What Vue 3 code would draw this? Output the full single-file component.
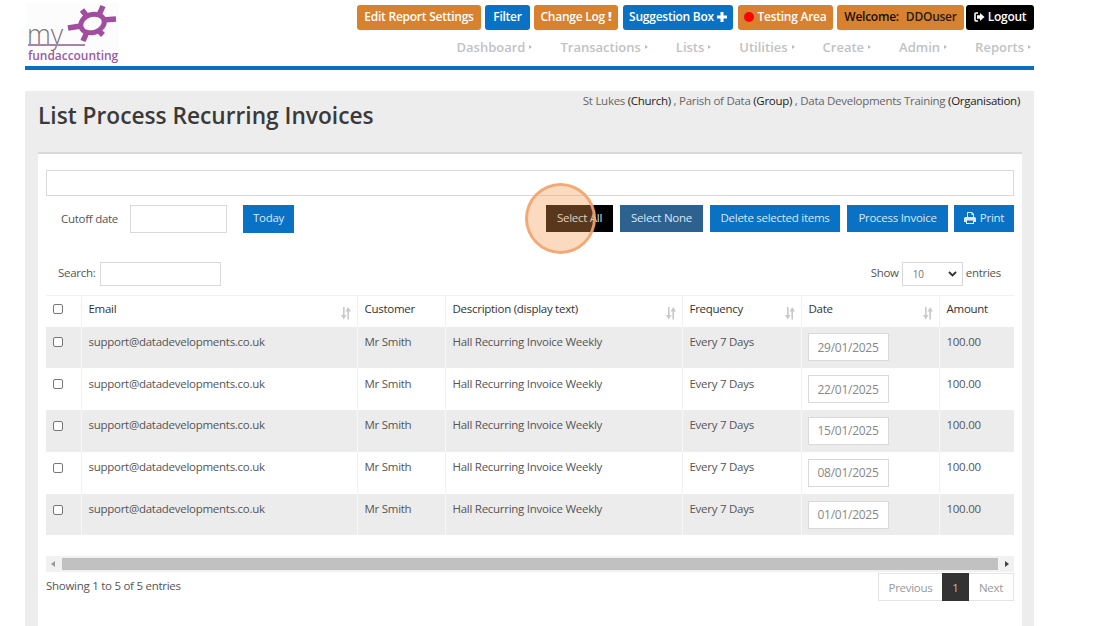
<script setup>
const navItems = ['Dashboard', 'Transactions', 'Lists', 'Utilities', 'Create', 'Admin', 'Reports']
const dates = ['29/01/2025', '22/01/2025', '15/01/2025', '08/01/2025', '01/01/2025']
const sortPath = 'M2 0h1.600v8H5.500L2.800 12.500 0 8h2zM8 12.500H6.400v-8H4.500L7.200 0 10 4.500H8z'
</script>

<template>
  <div class="page">
    <header class="header">
      <div class="logo">
        <svg class="logo-star" viewBox="0 0 60 48" width="60" height="48">
          <g fill="none" stroke="#a04f9f">
            <ellipse cx="34.500" cy="19.500" rx="12" ry="9" stroke-width="5" transform="rotate(-18 34.500 19.500)" />
            <path d="M41 11 45 2M28 11 24 6M45 16 58 15M41 27 45 31M29 28 25 37M23 22 10 24" stroke-width="5.500" />
          </g>
        </svg>
        <span class="logo-my">my</span>
        <span class="logo-rule"></span>
        <span class="logo-name">fundaccounting</span>
      </div>
      <div class="header-right">
        <div class="actions">
          <a class="hbtn orange w-edit">Edit Report Settings</a>
          <a class="hbtn blue w-filter">Filter</a>
          <a class="hbtn orange w-log">Change Log <b class="bang">!</b></a>
          <a class="hbtn blue w-sug">Suggestion Box
            <svg width="10" height="10" viewBox="0 0 10 10"><path d="M5 0v10M0 5h10" stroke="#fff" stroke-width="3" /></svg>
          </a>
          <a class="hbtn orange w-test"><i class="dot"></i>Testing Area</a>
          <a class="hbtn orange dark-text w-wel"><span>Welcome:</span><span class="wel-user">DDOuser</span></a>
          <a class="hbtn black w-out">
            <svg width="11" height="10" viewBox="0 0 11 10"><path d="M4 1H2a1 1 0 0 0-1 1v6a1 1 0 0 0 1 1h2" fill="none" stroke="#fff" stroke-width="1.6" /><path d="M6 1l4.500 4L6 9V6.800H3V3.200h3z" fill="#fff" /></svg>
            Logout
          </a>
        </div>
        <nav class="nav">
          <a v-for="n in navItems" :key="n" class="nav-item">{{ n }}<i class="caret"></i></a>
        </nav>
      </div>
    </header>
    <div class="bluebar"></div>

    <main class="panel">
      <div class="panel-head">
        <h1>List Process Recurring Invoices</h1>
        <p class="org">St Lukes <em>(Church)</em> , Parish of Data <em>(Group)</em> , Data Developments Training <em>(Organisation)</em></p>
      </div>

      <section class="card">
        <input class="wide" />
        <div class="toolbar">
          <div class="cutoff">
            <label>Cutoff date</label>
            <input class="cut-input" />
            <a class="btn primary today">Today</a>
          </div>
          <div class="tools">
            <a class="btn black-btn sel-all">Select All<span class="ring"></span></a>
            <a class="btn navy">Select None</a>
            <a class="btn primary w-del">Delete selected items</a>
            <a class="btn primary w-proc">Process Invoice</a>
            <a class="btn primary w-print">
              <svg width="12" height="12" viewBox="0 0 12 12"><path d="M3 0h5l2 2v3H9V3H7.500V1H4v4H3zM1.500 5h9A1.500 1.500 0 0 1 12 6.500V10h-2v2H2v-2H0V6.500A1.500 1.500 0 0 1 1.500 5zM3 8.500V11h6V8.500z" fill="#dfeaf5" fill-rule="evenodd" /></svg>
              Print
            </a>
          </div>
        </div>

        <div class="filters">
          <label class="search"><span>Search:</span><input /></label>
          <label class="show"><span>Show</span>
            <span class="select">10
              <svg width="9" height="6" viewBox="0 0 9 6"><path d="M1 1l3.500 3.500L8 1" fill="none" stroke="#333" stroke-width="1.800" /></svg>
            </span>
            <span>entries</span>
          </label>
        </div>

        <table class="grid">
          <colgroup>
            <col class="c1" /><col class="c2" /><col class="c3" /><col class="c4" /><col class="c5" /><col class="c6" /><col class="c7" />
          </colgroup>
          <thead>
            <tr>
              <th><span class="check"></span></th>
              <th>Email<svg class="sort" width="10" height="13" viewBox="0 0 10 13"><path :d="sortPath" fill="#c9c9c9" /></svg></th>
              <th>Customer</th>
              <th>Description (display text)<svg class="sort" width="10" height="13" viewBox="0 0 10 13"><path :d="sortPath" fill="#c9c9c9" /></svg></th>
              <th>Frequency<svg class="sort" width="10" height="13" viewBox="0 0 10 13"><path :d="sortPath" fill="#c9c9c9" /></svg></th>
              <th>Date<svg class="sort" width="10" height="13" viewBox="0 0 10 13"><path :d="sortPath" fill="#c9c9c9" /></svg></th>
              <th>Amount</th>
            </tr>
          </thead>
          <tbody>
            <tr v-for="d in dates" :key="d">
              <td><span class="check"></span></td>
              <td>support@datadevelopments.co.uk</td>
              <td>Mr Smith</td>
              <td>Hall Recurring Invoice Weekly</td>
              <td>Every 7 Days</td>
              <td><span class="date">{{ d }}</span></td>
              <td>100.00</td>
            </tr>
          </tbody>
        </table>

        <div class="scrollbar">
          <i class="arrow left"></i>
          <span class="thumb"></span>
          <i class="arrow right"></i>
        </div>

        <div class="foot">
          <span>Showing 1 to 5 of 5 entries</span>
          <div class="pager">
            <a class="prev">Previous</a><a class="cur">1</a><a class="next">Next</a>
          </div>
        </div>
      </section>
    </main>
  </div>
</template>

<style>
html, body { margin: 0; background: #fff; overflow: hidden; }
</style>

<style scoped>
.page {
  width: 1009px;
  height: 626px;
  margin-left: 25px;
  overflow: hidden;
  font-family: "Open Sans", "Liberation Sans", sans-serif;
  font-size: 11.500px;
  letter-spacing: -0.27px;
  color: #555;
}
.header { display: flex; justify-content: space-between; height: 66px; }
.logo { position: relative; width: 93px; height: 62px; margin-top: 3px; margin-left: 1px; background: #fdfcfd; }
.logo-star { position: absolute; left: 32px; top: 1px; }
.logo-my { position: absolute; left: 1px; top: 18px; font-size: 27px; font-weight: 300; line-height: 26px; color: #7d7679; letter-spacing: 0; }
.logo-rule { position: absolute; left: 2px; top: 41px; width: 57px; height: 1.500px; background: #a884a8; }
.logo-name { position: absolute; left: 2px; top: 46px; font-size: 12px; font-weight: 600; line-height: 13px; color: #9a5c9e; letter-spacing: -0.05px; }

.header-right { display: flex; flex-direction: column; align-items: flex-end; }
.actions { display: flex; margin-top: 5px; height: 25px; gap: 4px; }
.hbtn {
  display: flex; align-items: center; justify-content: center; gap: 3px;
  box-sizing: border-box; height: 25px; padding-bottom: 3px; border-radius: 3px;
  color: #fff; font-size: 12px; font-weight: 600; letter-spacing: -0.25px; white-space: nowrap;
}
.hbtn svg { margin-top: 1px; }
.orange { background: #d8812f; }
.blue { background: #0a72c4; }
.black { background: #000; }
.dark-text { color: #111; }
.w-edit { width: 124px; }
.w-filter { width: 45px; }
.w-log { width: 84px; }
.w-sug { width: 110px; margin-left: 1px; }
.w-test { width: 95px; margin-left: 1px; }
.w-wel { width: 127px; gap: 7px; }
.wel-user { color: #222; }
.w-out { width: 68px; margin-left: -2px; }
.bang { font-weight: 800; font-size: 13px; }
.dot { width: 10px; height: 10px; margin-top: 1px; border-radius: 50%; background: #f00; }

.nav { display: flex; margin-top: 8px; padding-right: 3px; gap: 28px; font-size: 13px; font-weight: 600; color: #c2c2c2; letter-spacing: 0; line-height: 18px; }
.nav-item { display: inline-flex; align-items: center; }
.caret { display: inline-block; width: 0; height: 0; margin-left: 4px; border-left: 3px solid #bbb; border-top: 2px solid transparent; border-bottom: 2px solid transparent; }

.bluebar { height: 4px; background: #0a6fc0; }

.panel { margin-top: 21px; background: #eeeded; padding: 0 12px 0 13px; height: 535px; box-sizing: border-box; }
.panel-head { display: flex; justify-content: space-between; height: 61px; }
.panel-head h1 { margin: 11px 0 0; font-size: 22.700px; line-height: 28px; font-weight: 600; color: #3a3a3a; letter-spacing: 0; }
.org { margin: 2px 2px 0 0; font-size: 11.500px; line-height: 15px; color: #666; letter-spacing: -0.28px; }
.org em { font-style: normal; color: #222; }

.card { background: #fff; border-top: 2px solid #d8d8d8; padding: 16px 8px 0; height: 474px; box-sizing: border-box; }
.wide { display: block; width: 100%; height: 26px; box-sizing: border-box; border: 1px solid #d9d9d9; background: #fff; padding: 0; }
.toolbar { display: flex; justify-content: space-between; margin-top: 9px; height: 28px; }
.cutoff { display: flex; align-items: center; padding-left: 15px; }
.cutoff label { margin-bottom: 2px; }
.cut-input { width: 97px; height: 28px; box-sizing: border-box; border: 1px solid #d9d9d9; margin: 0 16px 0 12px; padding: 0; }
.tools { display: flex; gap: 7px; }
.btn {
  display: inline-flex; align-items: center; justify-content: center; gap: 4px;
  box-sizing: border-box; height: 27px; padding: 0 0 2px; color: #d8e8f5; white-space: nowrap;
}
.primary { background: #0a72c4; }
.today { width: 51px; height: 28px; padding-bottom: 3px; }
.navy { width: 83px; background: #2c6190; }
.w-del { width: 130px; }
.w-proc { width: 101px; }
.w-print { width: 60px; margin-left: -1px; }
.black-btn { position: relative; background: #000; width: 67px; }
.ring {
  position: absolute; left: -21px; top: -22px; width: 71px; height: 71px; box-sizing: border-box;
  border-radius: 50%; background: rgba(246, 152, 80, 0.36); border: 3px solid rgba(240, 165, 110, 0.9);
}

.filters { display: flex; justify-content: space-between; align-items: center; margin-top: 29px; height: 24px; }
.filters label > span:not(.select) { margin-bottom: 4px; }
.search { display: flex; align-items: center; gap: 4px; padding-left: 12px; }
.search input { width: 121px; height: 24px; box-sizing: border-box; border: 1px solid #d9d9d9; padding: 0; }
.show { display: flex; align-items: center; gap: 3px; padding-right: 13px; }
.select { display: flex; align-items: center; justify-content: space-between; width: 61px; height: 24px; box-sizing: border-box; border: 1px solid #d9d9d9; padding: 0 5px 0 10px; font-size: 10px; color: #777; }

.grid { width: 968px; margin-top: 9px; table-layout: fixed; border-collapse: collapse; }
.c1 { width: 35px; } .c2 { width: 276px; } .c3 { width: 88px; } .c4 { width: 237px; } .c5 { width: 119px; } .c6 { width: 138px; } .c7 { width: 75px; }
.grid th { position: relative; height: 31px; padding: 0 0 6px 7px; box-sizing: border-box; border-top: 1px solid #f2f2f2; border-left: 1px solid #f2f2f2; font-weight: 400; text-align: left; color: #333; }
.grid th:first-child, .grid td:first-child { padding: 0 0 0 7px; border-left: 0; }
.grid th:first-child { padding-bottom: 4px; }
.sort { position: absolute; right: 6px; top: 11px; }
.grid td { height: 41.800px; box-sizing: border-box; padding: 0 0 12px 7px; border-left: 1px solid #f2f2f2; color: #555; }
.grid td:first-child { padding-bottom: 10px; }
.grid tbody tr:nth-child(odd) td { background: #edecec; border-left-color: #f7f7f7; }
.check { display: block; width: 10px; height: 10px; box-sizing: border-box; border: 1px solid #777; border-radius: 2px; background: #fff; }
.grid td:nth-child(6) { padding: 0 0 0 6px; }
.date { display: flex; align-items: center; justify-content: center; width: 81px; height: 28px; box-sizing: border-box; border: 1px solid #d9d9d9; background: #fff; color: #888; font-size: 12px; }

.scrollbar { display: flex; align-items: center; justify-content: space-between; height: 16px; margin-top: 21px; background: #f1f1f1; }
.thumb { width: 936px; height: 12px; background: #c1c1c1; }
.arrow { width: 0; height: 0; border-top: 3px solid transparent; border-bottom: 3px solid transparent; margin: 0 5px; }
.arrow.left { border-right: 4px solid #999; }
.arrow.right { border-left: 4px solid #444; }

.foot { display: flex; justify-content: space-between; align-items: flex-start; margin-top: 1px; }
.foot > span { padding-top: 5px; line-height: 16px; }
.pager { display: flex; height: 28px; box-sizing: border-box; border: 1px solid #e4e4e4; color: #999; }
.pager a { display: flex; align-items: center; justify-content: center; box-sizing: border-box; }
.pager .prev { width: 63px; }
.pager .next { width: 44px; }
.pager .cur { width: 27px; background: #333; color: #bbb; margin: -1px 0; height: 28px; }
</style>
